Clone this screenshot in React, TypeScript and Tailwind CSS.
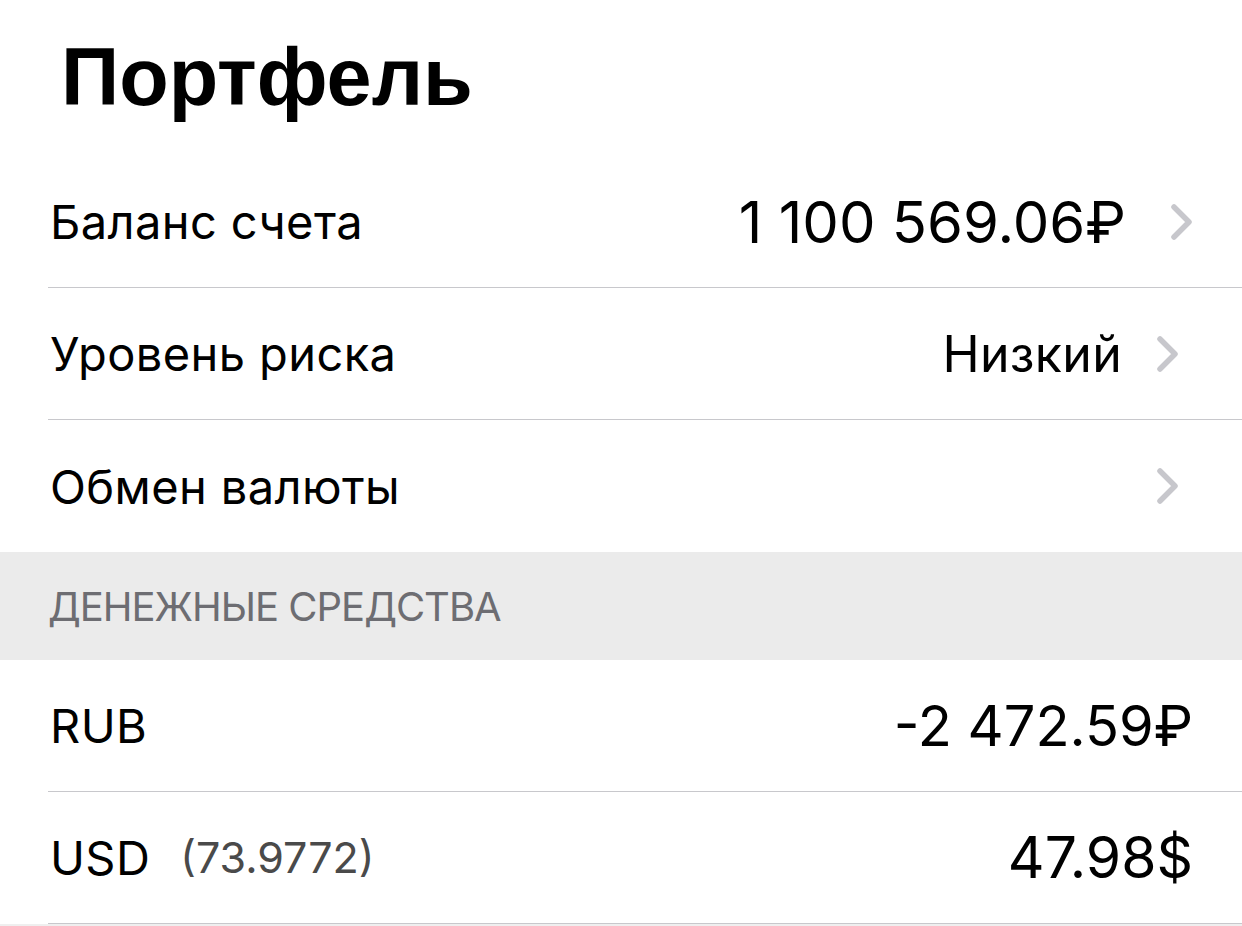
import React from 'react';

const Chevron = ({ className = '' }: { className?: string }) => (
  <svg className={className} width="24" height="38" viewBox="0 0 24 38" fill="none">
    <path d="M4 4l15 15L4 34" stroke="#c7c7cc" strokeWidth={5.5} strokeLinecap="round" strokeLinejoin="round" />
  </svg>
);

function Row({
  label,
  value,
  note,
  chevron,
  valueClass = 'text-[46px]',
  chevronClass = 'mr-[62px] ml-[34px]',
}: {
  label: string;
  value?: string;
  note?: string;
  chevron?: boolean;
  valueClass?: string;
  chevronClass?: string;
}) {
  return (
    <div className="pl-[48px]">
      <div className="h-[132px] flex items-center border-b-[1.5px] border-[#c8c8cc]">
        <span className="ml-[2px] text-[47px] text-black leading-none tracking-[0.4px]">{label}</span>
        {note && <span className="ml-[30px] text-[43px] text-[#4a4a4a] leading-none">{note}</span>}
        <div className="flex-1" />
        {value && <span className={`${valueClass} text-black leading-none`}>{value}</span>}
        {chevron ? <Chevron className={chevronClass} /> : <div className="w-[49px]" />}
      </div>
    </div>
  );
}

export default function App() {
  return (
    <div className="w-[1242px] h-[926px] bg-white overflow-hidden" style={{ fontFamily: 'Inter, "Liberation Sans", sans-serif' }}>
      <div className="h-[156px] pl-[61px] pt-[37px]">
        <h1
          className="text-[81px] font-bold leading-none text-black"
          style={{ fontFamily: '"Liberation Sans", Arial, sans-serif' }}
        >
          Портфель
        </h1>
      </div>

      <Row label="Баланс счета" value="1 100 569.06₽" chevron valueClass="text-[58px]" chevronClass="ml-[44px] mr-[48px]" />
      <Row label="Уровень риска" value="Низкий" chevron valueClass="text-[50px] tracking-[0.3px]" chevronClass="ml-[34px] mr-[62px]" />
      <div className="h-[132px] flex items-center pl-[50px]">
        <span className="text-[47px] text-black leading-none tracking-[0.4px]">Обмен валюты</span>
        <div className="flex-1" />
        <Chevron className="mr-[62px]" />
      </div>

      <div className="h-[108px] bg-[#ebebeb] flex items-center pl-[48px] pt-[2px]">
        <span className="text-[40px] text-[#6d6d72] leading-none tracking-[-1px]">ДЕНЕЖНЫЕ СРЕДСТВА</span>
      </div>

      <Row label="RUB" value="-2 472.59₽" valueClass="text-[56px]" />
      <Row label="USD" note="(73.9772)" value="47.98$" valueClass="text-[57px]" />
      <div className="h-[2px] bg-[#efefef]" />
    </div>
  );
}
